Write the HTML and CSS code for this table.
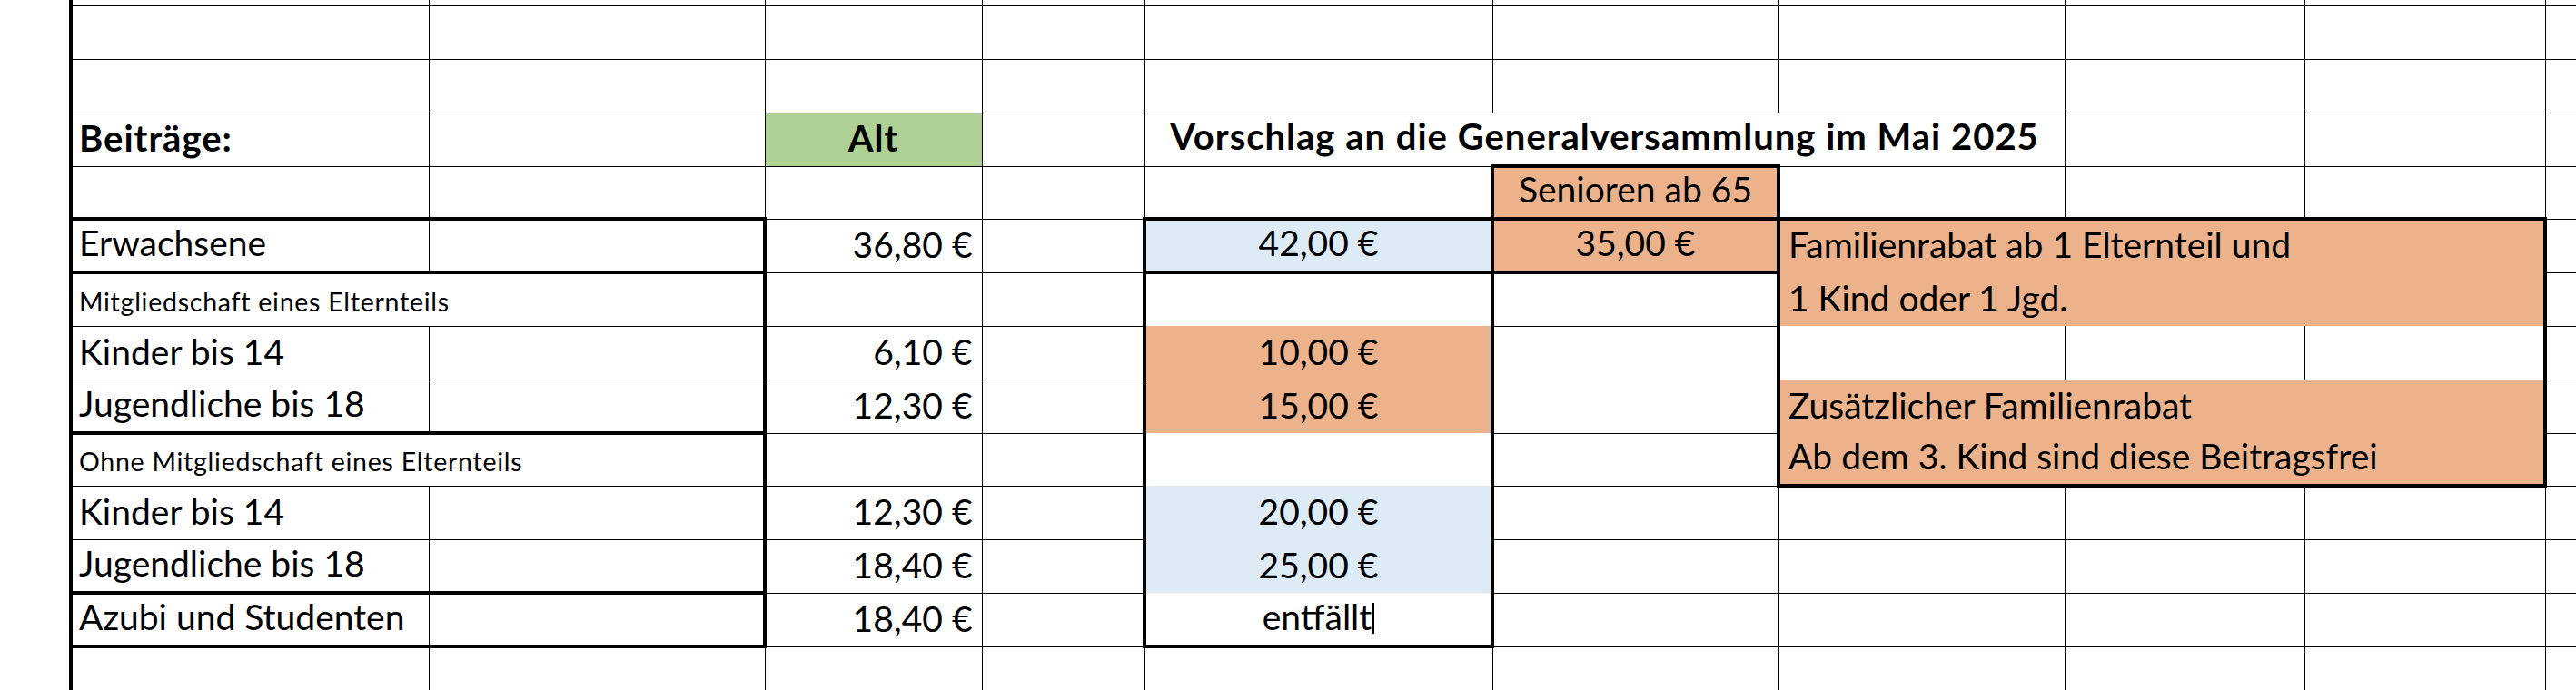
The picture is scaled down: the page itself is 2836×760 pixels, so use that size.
FILE: index.html
```html
<!DOCTYPE html>
<html lang="de">
<head>
  <meta charset="UTF-8">
  <title>Beiträge</title>
  <link rel="stylesheet" href="styles.css">
</head>
<body>
  <!-- Tabelle Beiträge -->
  <div class="sheet">
    <table class="grid">
      <colgroup>
        <col class="c-a"><col class="c-b"><col class="c-c"><col class="c-d"><col class="c-e">
        <col class="c-f"><col class="c-g"><col class="c-h"><col class="c-i"><col class="c-j">
      </colgroup>
      <tr class="stub">
        <td class="bl"></td><td></td><td></td><td></td><td></td><td></td><td></td><td></td><td></td><td></td>
      </tr>
      <tr>
        <td class="bl"></td><td></td><td></td><td></td><td></td><td></td><td></td><td></td><td></td><td></td>
      </tr>
      <tr>
        <td class="bl"></td><td></td><td></td><td></td><td></td><td></td><td></td><td></td><td></td><td></td>
      </tr>
      <tr>
        <td class="bl head">Beiträge:</td>
        <td></td>
        <td class="green head center">Alt</td>
        <td></td>
        <td class="head center" colspan="3">Vorschlag an die Generalversammlung im Mai 2025</td>
        <td></td><td></td><td></td>
      </tr>
      <tr class="short">
        <td class="bl"></td><td></td><td></td><td></td><td></td>
        <td class="orange center bt bl br bb">Senioren ab 65</td>
        <td></td><td></td><td></td><td></td>
      </tr>
      <tr>
        <td class="bl bt bb">Erwachsene</td>
        <td class="bt bb br"></td>
        <td class="num">36,80 €</td>
        <td></td>
        <td class="blue center bt bb bl br">42,00 €</td>
        <td class="orange center bl br bb">35,00 €</td>
        <td class="orange text bt bl br nb" colspan="3">Familienrabat ab 1 Elternteil und</td>
        <td></td>
      </tr>
      <tr>
        <td class="bl br small" colspan="2">Mitgliedschaft eines Elternteils</td>
        <td></td>
        <td></td>
        <td class="bl br nb"></td>
        <td></td>
        <td class="orange text bl br nt nb" colspan="3">1 Kind oder 1 Jgd.</td>
        <td></td>
      </tr>
      <tr>
        <td class="bl">Kinder bis 14</td>
        <td class="br"></td>
        <td class="num">6,10 €</td>
        <td></td>
        <td class="orange center bl br nt nb">10,00 €</td>
        <td class="nb"></td>
        <td class="bl nt nb"></td>
        <td class="nt nb"></td>
        <td class="br nt nb"></td>
        <td></td>
      </tr>
      <tr>
        <td class="bl bb">Jugendliche bis 18</td>
        <td class="br bb"></td>
        <td class="num">12,30 €</td>
        <td></td>
        <td class="orange center bl br nt nb">15,00 €</td>
        <td class="nt"></td>
        <td class="orange text bl br nt nb" colspan="3">Zusätzlicher Familienrabat</td>
        <td></td>
      </tr>
      <tr class="short">
        <td class="bl br small" colspan="2">Ohne Mitgliedschaft eines Elternteils</td>
        <td></td>
        <td></td>
        <td class="bl br nt nb"></td>
        <td></td>
        <td class="orange text bl br bb nt" colspan="3">Ab dem 3. Kind sind diese Beitragsfrei</td>
        <td></td>
      </tr>
      <tr>
        <td class="bl">Kinder bis 14</td>
        <td class="br"></td>
        <td class="num">12,30 €</td>
        <td></td>
        <td class="blue center bl br nt nb">20,00 €</td>
        <td></td><td></td><td></td><td></td><td></td>
      </tr>
      <tr>
        <td class="bl bb">Jugendliche bis 18</td>
        <td class="br bb"></td>
        <td class="num">18,40 €</td>
        <td></td>
        <td class="blue center bl br nt nb">25,00 €</td>
        <td></td><td></td><td></td><td></td><td></td>
      </tr>
      <tr>
        <td class="bl bb">Azubi und Studenten</td>
        <td class="br bb"></td>
        <td class="num">18,40 €</td>
        <td></td>
        <td class="center bl br bb nt">entfällt<span class="caret"></span></td>
        <td></td><td></td><td></td><td></td><td></td>
      </tr>
      <tr>
        <td class="bl"></td><td></td><td></td><td></td><td></td><td></td><td></td><td></td><td></td><td></td>
      </tr>
    </table>
  </div>
</body>
</html>
```

FILE: styles.css
```css
/* Grundlayout */
html,
body {
  margin: 0;
  padding: 0;
  background-color: #fff;
  overflow: hidden;
}

body {
  font-family: 'Lato', 'Liberation Sans', sans-serif;
  color: #000;
}

.sheet {
  padding-left: 76px;
}

/* Tabelle */
.grid {
  border-collapse: collapse;
  table-layout: fixed;
  width: 2826px;
}

.c-a { width: 394px; }
.c-b { width: 370px; }
.c-c { width: 239px; }
.c-d { width: 179px; }
.c-e { width: 383px; }
.c-f { width: 315px; }
.c-g { width: 315px; }
.c-h { width: 264px; }
.c-i { width: 265px; }
.c-j { width: 100px; }

.grid tr {
  height: 59px;
}

.grid tr.short {
  height: 58px;
}

.grid tr.stub {
  height: 6px;
}

.grid td {
  border: 1px solid #000;
  padding: 0 7px 11px;
  vertical-align: bottom;
  font-size: 39px;
  line-height: 1;
  white-space: nowrap;
}

.grid .stub td {
  border-top: none;
  padding: 0;
  font-size: 0;
  line-height: 0;
}

/* Textarten */
.grid .head {
  font-size: 40px;
  font-weight: 700;
  letter-spacing: 1px;
}

.grid .small {
  font-size: 28.5px;
  letter-spacing: 0.75px;
  padding-bottom: 12px;
}

.grid .center {
  text-align: center;
}

.grid .num {
  text-align: right;
  padding-right: 10px;
}

.grid .text {
  padding-left: 9px;
}

/* Farben */
.grid .green {
  background-color: #afd095;
}

.grid .orange {
  background-color: #ebb28b;
}

.grid .blue {
  background-color: #ddebf7;
}

/* dicke Rahmen */
.grid .bl { border-left: 4px solid #000; }
.grid .br { border-right: 4px solid #000; }
.grid .bt { border-top: 4px solid #000; }
.grid .bb { border-bottom: 4px solid #000; }

/* keine Linie */
.grid .nt { border-top-style: hidden; }
.grid .nb { border-bottom-style: hidden; }

.caret {
  display: inline-block;
  width: 2px;
  height: 34px;
  margin-left: 1px;
  background-color: #000;
  vertical-align: -4px;
}
```
